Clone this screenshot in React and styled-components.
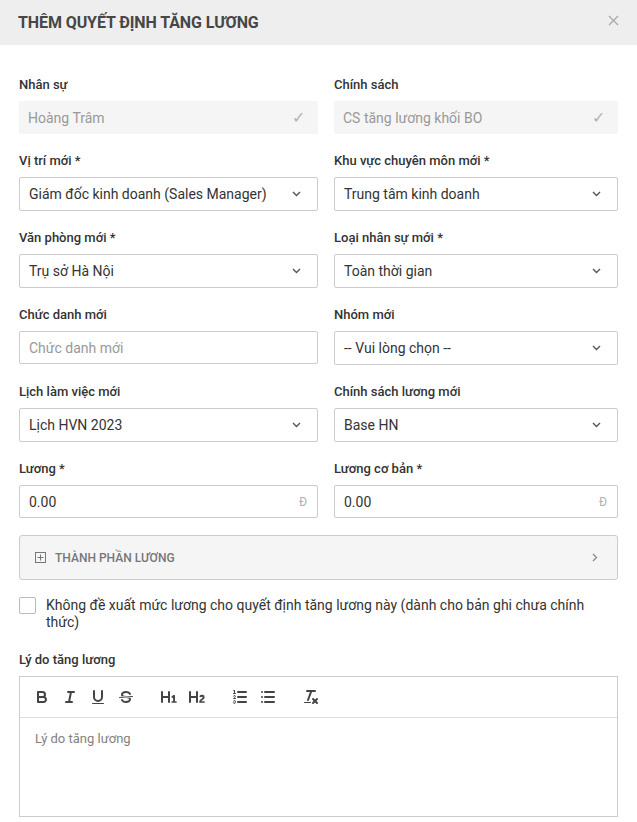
import React from "react";
import styled, { createGlobalStyle } from "styled-components";

const Global = createGlobalStyle`
  html, body { margin: 0; padding: 0; background: #fff; overflow: hidden; }
  body { font-family: Roboto, "Noto Sans", Arial, sans-serif; color: #333; }
  * { box-sizing: border-box; }
`;

const Modal = styled.div`
  width: 637px;
  background: #fff;
`;

const Header = styled.div`
  height: 45px;
  background: #eeeeee;
  display: flex;
  align-items: center;
  justify-content: space-between;
  padding: 0 18px 0 18px;
`;

const Title = styled.h2`
  margin: 0;
  font-size: 16px;
  font-weight: 700;
  color: #464646;
  letter-spacing: -0.1px;
`;

const Close = styled.span`
  display: inline-flex;
  margin-top: -4px;
`;

const Body = styled.div`
  padding: 32px 19px 0 19px;
`;

const Grid = styled.div`
  display: grid;
  grid-template-columns: 299px 1fr;
  column-gap: 16px;
  row-gap: 19px;
`;

const Field = styled.div`
  display: flex;
  flex-direction: column;
`;

const Label = styled.label`
  font-size: 13px;
  font-weight: 500;
  line-height: 16px;
  color: #333;
  margin-bottom: 8px;
`;

const Box = styled.div`
  height: ${(p) => (p.$h ? p.$h : 34)}px;
  display: flex;
  align-items: center;
  justify-content: space-between;
  padding: 0 ${(p) => (p.$pr ? p.$pr : 16)}px 0 ${(p) => (p.$readonly ? 8 : 9)}px;
  border: 1px solid ${(p) => (p.$readonly ? "#f5f5f5" : "#cccccc")};
  background: ${(p) => (p.$readonly ? "#f5f5f5" : "#fff")};
  border-radius: 2px;
  font-size: 14px;
  color: ${(p) => (p.$muted ? "#999" : "#333")};
`;

const Check = styled.span`
  color: #b3b3b3;
  font-size: 16px;
`;

const Currency = styled.span`
  color: #b0b0b0;
  font-size: 12px;
`;

const Chevron = ({ dir = "down", color = "#555" }) =>
  dir === "down" ? (
    <svg width="9" height="6" viewBox="0 0 9 6">
      <path d="M1 1l3.5 3.5L8 1" fill="none" stroke={color} strokeWidth="1.4" />
    </svg>
  ) : (
    <svg width="6" height="9" viewBox="0 0 6 9">
      <path d="M1 1l3.5 3.5L1 8" fill="none" stroke={color} strokeWidth="1.3" />
    </svg>
  );

const Panel = styled.div`
  margin-top: 17px;
  height: 45px;
  background: #f5f5f5;
  border: 1px solid #cccccc;
  border-radius: 3px;
  display: flex;
  align-items: center;
  justify-content: space-between;
  padding: 0 19px 0 15px;
`;

const PanelTitle = styled.div`
  display: flex;
  align-items: center;
  gap: 9px;
  font-size: 12px;
  font-weight: 500;
  color: #777;
  text-transform: uppercase;
`;

const CheckRow = styled.label`
  display: flex;
  align-items: flex-start;
  gap: 10px;
  margin-top: 17px;
  font-size: 14px;
  line-height: 17px;
  color: #333;
  padding-right: 20px;
`;

const CheckBox = styled.span`
  flex: none;
  width: 17px;
  height: 17px;
  border: 1px solid #bbbbbb;
  border-radius: 2px;
  background: #fff;
`;

const Reason = styled.div`
  margin-top: 21px;
  display: flex;
  flex-direction: column;
`;

const Editor = styled.div`
  border: 1px solid #cccccc;
`;

const Toolbar = styled.div`
  display: flex;
  padding: 8px;
  border-bottom: 1px solid #dddddd;
`;

const Group = styled.div`
  display: flex;
  margin-right: 15px;
`;

const ToolBtn = styled.span`
  width: 28px;
  height: 24px;
  padding: 3px 5px;
  display: inline-flex;
  svg { width: 18px; height: 18px; }
  .s { fill: none; stroke: #444; stroke-width: 2; stroke-linecap: round; stroke-linejoin: round; }
  .t { fill: none; stroke: #444; stroke-width: 1; stroke-linecap: round; stroke-linejoin: round; }
  .f { fill: #444; }
`;

const EditorBody = styled.div`
  height: 98px;
  padding: 12px 15px;
  font-size: 13px;
  line-height: 18px;
  color: #857f7b;
`;

const Tool = ({ children }) => (
  <ToolBtn>
    <svg viewBox="0 0 18 18">{children}</svg>
  </ToolBtn>
);

function SelectBox({ value }) {
  return (
    <Box>
      <span>{value}</span>
      <Chevron />
    </Box>
  );
}

export default function App() {
  return (
    <Modal>
      <Global />
      <Header>
        <Title>THÊM QUYẾT ĐỊNH TĂNG LƯƠNG</Title>
        <Close>
          <svg width="11" height="11" viewBox="0 0 11 11">
            <path d="M1 1l9 9M10 1l-9 9" stroke="#a8a8a8" strokeWidth="1.3" />
          </svg>
        </Close>
      </Header>
      <Body>
        <Grid>
          <Field>
            <Label>Nhân sự</Label>
            <Box $readonly $muted $pr={12} $h={33}>
              <span>Hoàng Trâm</span>
              <Check>✓</Check>
            </Box>
          </Field>
          <Field>
            <Label>Chính sách</Label>
            <Box $readonly $muted $pr={12} $h={33}>
              <span>CS tăng lương khối BO</span>
              <Check>✓</Check>
            </Box>
          </Field>
          <Field>
            <Label>Vị trí mới *</Label>
            <SelectBox value="Giám đốc kinh doanh (Sales Manager)" />
          </Field>
          <Field>
            <Label>Khu vực chuyên môn mới *</Label>
            <SelectBox value="Trung tâm kinh doanh" />
          </Field>
          <Field>
            <Label>Văn phòng mới *</Label>
            <SelectBox value="Trụ sở Hà Nội" />
          </Field>
          <Field>
            <Label>Loại nhân sự mới *</Label>
            <SelectBox value="Toàn thời gian" />
          </Field>
          <Field>
            <Label>Chức danh mới</Label>
            <Box $muted $h={33}>
              <span>Chức danh mới</span>
            </Box>
          </Field>
          <Field>
            <Label>Nhóm mới</Label>
            <SelectBox value="-- Vui lòng chọn --" />
          </Field>
          <Field>
            <Label>Lịch làm việc mới</Label>
            <SelectBox value="Lịch HVN 2023" />
          </Field>
          <Field>
            <Label>Chính sách lương mới</Label>
            <SelectBox value="Base HN" />
          </Field>
          <Field>
            <Label>Lương *</Label>
            <Box $pr={10} $h={33}>
              <span>0.00</span>
              <Currency>Đ</Currency>
            </Box>
          </Field>
          <Field>
            <Label>Lương cơ bản *</Label>
            <Box $pr={10} $h={33}>
              <span>0.00</span>
              <Currency>Đ</Currency>
            </Box>
          </Field>
        </Grid>

        <Panel>
          <PanelTitle>
            <svg width="11" height="11" viewBox="0 0 11 11">
              <rect x="0.5" y="0.5" width="10" height="10" fill="none" stroke="#777" strokeWidth="1" />
              <path d="M5.5 2.5v6M2.5 5.5h6" stroke="#777" strokeWidth="1" />
            </svg>
            <span>Thành phần lương</span>
          </PanelTitle>
          <Chevron dir="right" color="#888" />
        </Panel>

        <CheckRow>
          <CheckBox />
          <span>Không đề xuất mức lương cho quyết định tăng lương này (dành cho bản ghi chưa chính thức)</span>
        </CheckRow>

        <Reason>
          <Label>Lý do tăng lương</Label>
          <Editor>
            <Toolbar>
              <Group>
                <Tool>
                  <path className="s" d="M5,4H9.5A2.5,2.5,0,0,1,12,6.5v0A2.5,2.5,0,0,1,9.5,9H5A0,0,0,0,1,5,9V4A0,0,0,0,1,5,4Z" />
                  <path className="s" d="M5,9h5.5A2.5,2.5,0,0,1,13,11.5v0A2.5,2.5,0,0,1,10.5,14H5a0,0,0,0,1,0,0V9A0,0,0,0,1,5,9Z" />
                </Tool>
                <Tool>
                  <line className="s" x1="7" x2="13" y1="4" y2="4" />
                  <line className="s" x1="5" x2="11" y1="14" y2="14" />
                  <line className="s" x1="8" x2="10" y1="14" y2="4" />
                </Tool>
                <Tool>
                  <path className="s" d="M5,3V9a4.012,4.012,0,0,0,4,4H9a4.012,4.012,0,0,0,4-4V3" />
                  <rect className="f" height="1" rx="0.5" ry="0.5" width="12" x="3" y="15" />
                </Tool>
                <Tool>
                  <line className="t" x1="15.5" x2="2.5" y1="8.5" y2="9.5" />
                  <path className="f" d="M9.007,8C6.542,7.791,6,7.519,6,6.5,6,5.792,7.283,5,9,5c1.571,0,2.765.679,2.969,1.309a1,1,0,0,0,1.9-.617C13.356,4.106,11.354,3,9,3,6.2,3,4,4.538,4,6.5a3.2,3.2,0,0,0,.5,1.843Z" />
                  <path className="f" d="M8.984,10C11.457,10.208,12,10.479,12,11.5c0,.708-1.283,1.5-3,1.5-1.571,0-2.765-.679-2.969-1.309a1,1,0,1,0-1.9.617C4.644,13.894,6.646,15,9,15c2.8,0,5-1.538,5-3.5a3.2,3.2,0,0,0-.5-1.843Z" />
                </Tool>
              </Group>
              <Group>
                <Tool>
                  <path className="f" d="M10,4V14a1,1,0,0,1-2,0V10H3v4a1,1,0,0,1-2,0V4A1,1,0,0,1,3,4V8H8V4a1,1,0,0,1,2,0Zm6.06787,9.209H14.98975V7.59863a.54085.54085,0,0,0-.605-.60547h-.62744a1.01119,1.01119,0,0,0-.748.29688L11.645,8.56641a.5435.5435,0,0,0-.022.8584l.28613.30762a.53861.53861,0,0,0,.84717.0332l.09912-.08789a1.2137,1.2137,0,0,0,.2417-.35254h.02246s-.01123.30859-.01123.60547V13.209H12.041a.54085.54085,0,0,0-.605.60547v.43945a.54085.54085,0,0,0,.605.60547h4.02686a.54085.54085,0,0,0,.605-.60547v-.43945A.54085.54085,0,0,0,16.06787,13.209Z" />
                </Tool>
                <Tool>
                  <path className="f" d="M16.73975,13.81445v.43945a.54085.54085,0,0,1-.605.60547H11.855a.58392.58392,0,0,1-.64893-.60547V14.0127c0-2.90527,3.39941-3.42187,3.39941-4.55469a.77675.77675,0,0,0-.84717-.78125,1.17684,1.17684,0,0,0-.83594.38477c-.2749.26367-.561.374-.85791.13184l-.4292-.34082c-.30811-.24219-.38525-.51758-.1543-.81445a2.97155,2.97155,0,0,1,2.45361-1.17676,2.45393,2.45393,0,0,1,2.68408,2.40918c0,2.45312-3.1792,2.92676-3.27832,3.93848h2.79443A.54085.54085,0,0,1,16.73975,13.81445ZM9,3A.99974.99974,0,0,0,8,4V8H3V4A1,1,0,0,0,1,4V14a1,1,0,0,0,2,0V10H8v4a1,1,0,0,0,2,0V4A.99974.99974,0,0,0,9,3Z" />
                </Tool>
              </Group>
              <Group>
                <Tool>
                  <line className="s" x1="7" x2="15" y1="4" y2="4" />
                  <line className="s" x1="7" x2="15" y1="9" y2="9" />
                  <line className="s" x1="7" x2="15" y1="14" y2="14" />
                  <line className="t" x1="2.5" x2="4.5" y1="5.5" y2="5.5" />
                  <path className="f" d="M3.5,6A0.5,0.5,0,0,1,3,5.5V3.085l-0.276.138A0.5,0.5,0,0,1,2.053,3c-0.124-.247-0.023-0.324.224-0.447l1-.5A0.5,0.5,0,0,1,4,2.5v3A0.5,0.5,0,0,1,3.5,6Z" />
                  <path className="t" d="M4.5,10.5h-2c0-.234,1.850-1.076,1.850-2.234A0.959,0.959,0,0,0,2.5,8.156" />
                  <path className="t" d="M2.5,14.846a0.959,0.959,0,0,0,1.85-.109A0.7,0.7,0,0,0,3.75,14a0.688,0.688,0,0,0,.6-0.736,0.959,0.959,0,0,0-1.85-.109" />
                </Tool>
                <Tool>
                  <line className="s" x1="6" x2="15" y1="4" y2="4" />
                  <line className="s" x1="6" x2="15" y1="9" y2="9" />
                  <line className="s" x1="6" x2="15" y1="14" y2="14" />
                  <line className="s" x1="3" x2="3" y1="4" y2="4" />
                  <line className="s" x1="3" x2="3" y1="9" y2="9" />
                  <line className="s" x1="3" x2="3" y1="14" y2="14" />
                </Tool>
              </Group>
              <Group>
                <Tool>
                  <line className="s" x1="5" x2="13" y1="3" y2="3" />
                  <line className="s" x1="6" x2="9.35" y1="12" y2="3" />
                  <line className="s" x1="11" x2="15" y1="11" y2="15" />
                  <line className="s" x1="15" x2="11" y1="11" y2="15" />
                  <rect className="f" height="1" rx="0.5" ry="0.5" width="7" x="2" y="14" />
                </Tool>
              </Group>
            </Toolbar>
            <EditorBody>Lý do tăng lương</EditorBody>
          </Editor>
        </Reason>
      </Body>
    </Modal>
  );
}
